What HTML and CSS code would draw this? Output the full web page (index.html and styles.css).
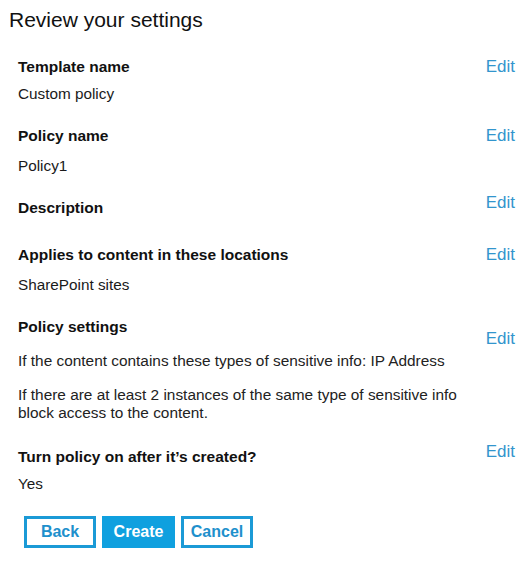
FILE: index.html
```html
<!DOCTYPE html>
<html lang="en">
<head>
  <meta charset="UTF-8">
  <title>Review your settings</title>
  <link rel="stylesheet" href="styles.css">
</head>
<body>
  <h1 class="page-title">Review your settings</h1>

  <div class="review-list">
    <div class="review-item">
      <div class="review-body">
        <h2 class="review-head">Template name</h2>
        <div class="review-value review-value--tight">Custom policy</div>
      </div>
      <a class="edit-link" href="#">Edit</a>
    </div>

    <div class="review-item">
      <div class="review-body">
        <h2 class="review-head">Policy name</h2>
        <div class="review-value">Policy1</div>
      </div>
      <a class="edit-link" href="#">Edit</a>
    </div>

    <div class="review-item review-item--empty">
      <div class="review-body">
        <h2 class="review-head">Description</h2>
      </div>
      <a class="edit-link edit-link--up" href="#">Edit</a>
    </div>

    <div class="review-item">
      <div class="review-body">
        <h2 class="review-head">Applies to content in these locations</h2>
        <div class="review-value">SharePoint sites</div>
      </div>
      <a class="edit-link" href="#">Edit</a>
    </div>

    <div class="review-item review-item--wide">
      <div class="review-body">
        <h2 class="review-head">Policy settings</h2>
        <p class="review-note">If the content contains these types of sensitive info: IP Address</p>
        <p class="review-note">If there are at least 2 instances of the same type of sensitive info<br>block access to the content.</p>
      </div>
      <a class="edit-link edit-link--low" href="#">Edit</a>
    </div>

    <div class="review-item review-item--last">
      <div class="review-body">
        <h2 class="review-head">Turn policy on after it’s created?</h2>
        <div class="review-value review-value--tight">Yes</div>
      </div>
      <a class="edit-link edit-link--up" href="#">Edit</a>
    </div>
  </div>

  <div class="actions">
    <button class="btn">Back</button>
    <button class="btn btn-primary">Create</button>
    <button class="btn">Cancel</button>
  </div>
</body>
</html>
```

FILE: styles.css
```css
body {
  margin: 0;
  padding: 8px 15px 0 9px;
  font-family: 'Liberation Sans', Arial, sans-serif;
  color: #1a1a1a;
  background: #ffffff;
}

.page-title {
  margin: 0;
  font-size: 21px;
  line-height: 24px;
  font-weight: normal;
  color: #111;
}

.review-list {
  padding: 26px 0 0 9px;
}

.review-item {
  display: flex;
  align-items: flex-start;
  margin-bottom: 24px;
}

.review-item--empty {
  margin-bottom: 29px;
}

.review-item--wide {
  margin-bottom: 26px;
}

.review-item--last {
  margin-bottom: 0;
}

.review-body {
  flex: 1;
}

.review-head {
  margin: 0;
  font-size: 15.5px;
  line-height: 18px;
  font-weight: bold;
  color: #111;
}

.review-value {
  margin-top: 12px;
  font-size: 15.3px;
  line-height: 18px;
}

.review-value--tight {
  margin-top: 9px;
}

.review-note {
  margin: 16px 0 0;
  font-size: 15.4px;
  line-height: 18px;
  color: #222;
}

.edit-link {
  font-size: 17px;
  line-height: 18px;
  color: #3295cd;
  text-decoration: none;
}

.edit-link--up {
  margin-top: -5px;
}

.edit-link--low {
  margin-top: 12px;
}

.actions {
  display: flex;
  gap: 6px;
  padding-left: 15px;
  margin-top: 23px;
}

.btn {
  width: 72px;
  height: 32px;
  box-sizing: border-box;
  border: 3px solid #1b9ad6;
  background: #fff;
  color: #1e90cc;
  font-family: 'Liberation Sans', Arial, sans-serif;
  font-size: 16px;
  font-weight: bold;
  padding: 0;
  cursor: pointer;
}

.btn-primary {
  width: 73px;
  background: #0fa0df;
  border-color: #0fa0df;
  color: #fff;
}
```
